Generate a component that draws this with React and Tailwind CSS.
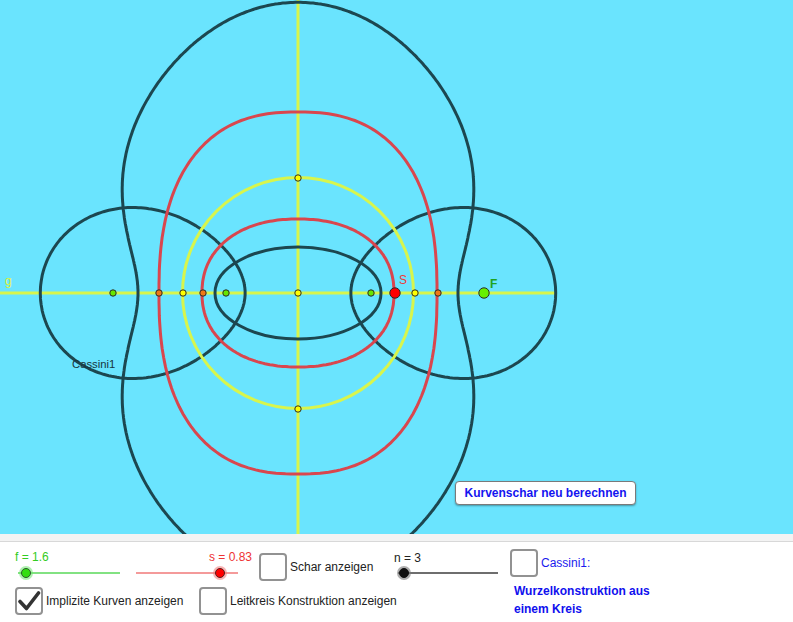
import React from "react";

const CX = 298;
const CY = 293;

// outer curve, polar samples [angle deg, radius] in the first quadrant
const OUTER = [[0, 160], [5.68, 161.8], [16.57, 175.3], [23.48, 190.8], [31.06, 205.5], [37.55, 218.2], [45.88, 233], [57.06, 253.8], [67.2, 271.2], [78.9, 285.4], [90, 290]];
const TERMS = 4;

// least squares fit r(t) = sum a_k cos(2 k t)
function fitOuter() {
  const A = Array.from({ length: TERMS }, () => Array(TERMS + 1).fill(0));
  OUTER.forEach(([deg, r]) => {
    const t = (deg * Math.PI) / 180;
    const f = Array.from({ length: TERMS }, (_, k) => Math.cos(2 * k * t));
    for (let i = 0; i < TERMS; i++) {
      for (let j = 0; j < TERMS; j++) A[i][j] += f[i] * f[j];
      A[i][TERMS] += f[i] * r;
    }
  });
  for (let i = 0; i < TERMS; i++) {
    let p = i;
    for (let k = i + 1; k < TERMS; k++) if (Math.abs(A[k][i]) > Math.abs(A[p][i])) p = k;
    [A[i], A[p]] = [A[p], A[i]];
    for (let k = i + 1; k < TERMS; k++) {
      const m = A[k][i] / A[i][i];
      for (let j = i; j <= TERMS; j++) A[k][j] -= m * A[i][j];
    }
  }
  const x = Array(TERMS).fill(0);
  for (let i = TERMS - 1; i >= 0; i--) {
    let s = A[i][TERMS];
    for (let j = i + 1; j < TERMS; j++) s -= A[i][j] * x[j];
    x[i] = s / A[i][i];
  }
  return x;
}

function outerPath() {
  const a = fitOuter();
  let d = "";
  for (let i = 0; i <= 720; i++) {
    const t = (i / 2) * (Math.PI / 180);
    let r = 0;
    for (let k = 0; k < TERMS; k++) r += a[k] * Math.cos(2 * k * t);
    d += `${i ? "L" : "M"}${(CX + r * Math.cos(t)).toFixed(1)},${(CY - r * Math.sin(t)).toFixed(1)}`;
  }
  return d + "Z";
}

function superellipse(a, b, n, steps = 240) {
  let d = "";
  for (let i = 0; i <= steps; i++) {
    const t = (i / steps) * Math.PI * 2;
    const c = Math.cos(t);
    const s = Math.sin(t);
    const x = CX + a * Math.sign(c) * Math.pow(Math.abs(c), 2 / n);
    const y = CY - b * Math.sign(s) * Math.pow(Math.abs(s), 2 / n);
    d += `${i ? "L" : "M"}${x.toFixed(1)},${y.toFixed(1)}`;
  }
  return d + "Z";
}

// one loop of a cassini oval, foci on the x axis
function cassiniLoop(c, b2, side) {
  const c2 = c * c;
  const c4 = c2 * c2;
  const b4 = b2 * b2;
  const tm = Math.acos(Math.sqrt((c4 - b4) / c4)) / 2;
  const steps = 160;
  const outer = [];
  const inner = [];
  for (let i = 0; i <= steps; i++) {
    const phi = -Math.PI / 2 + (i / steps) * Math.PI;
    const th = tm * Math.sin(phi) * 0.99999;
    const k = c2 * Math.cos(2 * th);
    const disc = Math.sqrt(Math.max(0, k * k - c4 + b4));
    const ro = Math.sqrt(k + disc);
    const ri = Math.sqrt(Math.max(0, k - disc));
    outer.push([CX + side * ro * Math.cos(th), CY - ro * Math.sin(th)]);
    inner.push([CX + side * ri * Math.cos(th), CY - ri * Math.sin(th)]);
  }
  const all = [...outer, ...inner.reverse()];
  return all.map(([x, y], i) => `${i ? "L" : "M"}${x.toFixed(1)},${y.toFixed(1)}`).join("") + "Z";
}

const DARK = "#1c4750";
const RED = "#d9464e";
const YEL = "#d8f54c";

function Dot({ x, y, r = 3.2, fill }) {
  return <circle cx={x} cy={y} r={r} fill={fill} stroke="#2a2a2a" strokeWidth="1" />;
}

function Checkbox({ checked }) {
  return (
    <div className="flex h-[28px] w-[28px] shrink-0 items-center justify-center rounded-[4px] border-2 border-[#929292] bg-white">
      {checked && (
        <svg width="24" height="24" viewBox="0 0 24 24">
          <path d="M3 12.5 L9.5 19.5 L21.5 4" fill="none" stroke="#333" strokeWidth="3.6" strokeLinecap="round" strokeLinejoin="round" />
        </svg>
      )}
    </div>
  );
}

export default function App() {
  const font = "font-['Liberation_Sans',Arial,sans-serif]";
  return (
    <div className={`w-[793px] h-[622px] overflow-hidden bg-white ${font}`}>
      {/* drawing pad */}
      <div className="relative h-[534px] w-full bg-[#6ae4fe]">
        <svg width="793" height="534" className="block">
          <line x1="0" y1={CY} x2="556" y2={CY} stroke={YEL} strokeWidth="3" />
          <line x1={CX} y1="0" x2={CX} y2="534" stroke={YEL} strokeWidth="3" />

          <path d={outerPath()} fill="none" stroke={DARK} strokeWidth="3" />
          <path d={cassiniLoop(186, 31800, 1)} fill="none" stroke={DARK} strokeWidth="3" />
          <path d={cassiniLoop(186, 31800, -1)} fill="none" stroke={DARK} strokeWidth="3" />
          <ellipse cx={CX} cy={CY} rx="83" ry="46" fill="none" stroke={DARK} strokeWidth="3" />

          <path d={superellipse(139, 181, 2.45)} fill="none" stroke={RED} strokeWidth="3" />
          <path d={superellipse(96, 74, 2.2)} fill="none" stroke={RED} strokeWidth="3" />
          <circle cx={CX} cy={CY} r="115.5" fill="none" stroke={YEL} strokeWidth="3" />

          <Dot x={113} y={CY} fill="#66e600" />
          <Dot x={159} y={CY} fill="#f07814" />
          <Dot x={183} y={CY} fill="#ffff00" />
          <Dot x={203} y={CY} fill="#f07814" />
          <Dot x={226} y={CY} fill="#66e600" />
          <Dot x={CX} y={CY} fill="#ffff00" />
          <Dot x={CX} y={178} fill="#ffff00" />
          <Dot x={CX} y={409} fill="#ffff00" />
          <Dot x={371} y={CY} fill="#66e600" />
          <Dot x={415} y={CY} fill="#ffff00" />
          <Dot x={438} y={CY} fill="#f07814" />
          <Dot x={395} y={CY} r={5.2} fill="#ff0000" />
          <Dot x={484} y={CY} r={5.2} fill="#66f000" />

          <text x="5" y="285" fontSize="12" fill="#e2f230" fontFamily="Liberation Sans, Arial, sans-serif">g</text>
          <text x="399" y="284" fontSize="12" fill="#f03a3a" fontFamily="Liberation Sans, Arial, sans-serif">S</text>
          <text x="490" y="288" fontSize="12" fontWeight="bold" fill="#1fa21f" fontFamily="Liberation Sans, Arial, sans-serif">F</text>
          <text x="72" y="368" fontSize="11.3" fill="#17363d" fontFamily="Liberation Sans, Arial, sans-serif">Cassini1</text>
        </svg>

        <button className="absolute left-[455px] top-[481px] flex h-[24px] w-[181px] items-center justify-center rounded-[4px] border border-[#7a7a7a] bg-white text-[12px] font-bold text-[#1414f0] shadow-[0_1px_2px_rgba(0,0,0,0.35)]">
          Kurvenschar neu berechnen
        </button>
      </div>

      <div className="h-[8px] border-b border-[#d8d8d8] bg-[#f3f3f3]" />

      {/* controls */}
      <div className="flex h-[80px] bg-white pl-[15px] text-[12px] leading-[14px]">
        <div className="flex w-[495px] flex-col">
          <div className="flex h-[45px]">
            <div className="flex w-[121px] flex-col pt-[8px]">
              <span className="text-[#33cc22]">f = 1.6</span>
              <div className="relative ml-[3px] mt-[3px] h-[12px] w-[102px]">
                <div className="absolute left-0 right-0 top-[5px] h-[2px] bg-[#82e282]" />
                <div className="absolute left-[3px] top-[1px] h-[10px] w-[10px] rounded-full border border-[#2b5a2b] bg-[#33dd11] shadow-[0_0_0_2px_rgba(110,230,110,0.55)]" />
              </div>
            </div>
            <div className="flex w-[123px] flex-col pt-[8px]">
              <span className="pr-[7px] text-right text-[#ee3333]">s = 0.83</span>
              <div className="relative mt-[3px] h-[12px] w-[102px]">
                <div className="absolute left-0 right-0 top-[5px] h-[2px] bg-[#f49a9a]" />
                <div className="absolute left-[79px] top-[1px] h-[10px] w-[10px] rounded-full border border-[#5a1a1a] bg-[#ff0000] shadow-[0_0_0_2px_rgba(240,120,120,0.55)]" />
              </div>
            </div>
            <div className="flex w-[135px] items-center pt-[11px] pb-[6px]">
              <Checkbox />
              <span className="ml-[3px] text-[#222]">Schar anzeigen</span>
            </div>
            <div className="flex flex-col pt-[9px]">
              <span className="text-[#222]">n = 3</span>
              <div className="relative ml-[4px] mt-[2px] h-[12px] w-[100px]">
                <div className="absolute left-0 right-0 top-[5px] h-[2px] bg-[#6e6e6e]" />
                <div className="absolute left-[1px] top-[1px] h-[10px] w-[10px] rounded-full border border-[#111] bg-[#111] shadow-[0_0_0_2px_rgba(120,120,120,0.6)]" />
              </div>
            </div>
          </div>
          <div className="flex items-center">
            <div className="flex w-[184px] items-center">
              <Checkbox checked />
              <span className="ml-[3px] text-[#222]">Implizite Kurven anzeigen</span>
            </div>
            <div className="flex items-center">
              <Checkbox />
              <span className="ml-[3px] text-[#222]">Leitkreis Konstruktion anzeigen</span>
            </div>
          </div>
        </div>
        <div className="flex flex-col pt-[7px]">
          <div className="flex items-center">
            <Checkbox />
            <span className="ml-[3px] text-[#1a1aee]">Cassini1:</span>
          </div>
          <div className="ml-[4px] mt-[5px] text-[12px] font-bold leading-[18px] text-[#1010ee]">
            <div>Wurzelkonstruktion aus</div>
            <div>einem Kreis</div>
          </div>
        </div>
      </div>
    </div>
  );
}
